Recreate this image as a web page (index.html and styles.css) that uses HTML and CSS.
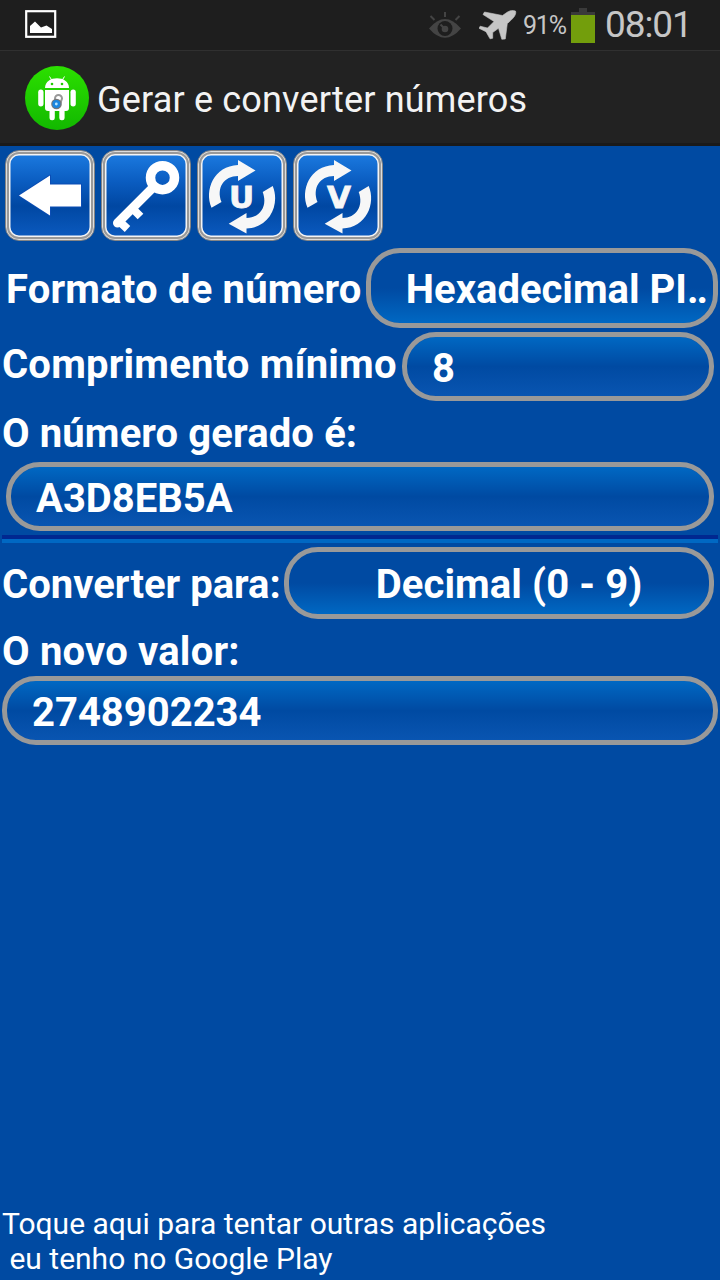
FILE: index.html
```
<!DOCTYPE html>
<html lang="pt">
<head>
    <meta charset="UTF-8">
    <meta name="viewport" content="width=device-width, initial-scale=1.0">
    <title>Gerar e converter números</title>
    <link rel="stylesheet" href="styles.css">
</head>
<body>
    <!-- Status Bar -->
    <div class="status-bar">
        <svg class="picture-icon" width="32" height="30" viewBox="0 0 32 30">
            <rect x="1.2" y="2.2" width="29" height="25.6" fill="none" stroke="#fff" stroke-width="2.2"/>
            <path d="M5 24V17L10 12.500L16 18.500L21.500 16.500L27 20V24Z" fill="#fff"/>
        </svg>
        <div class="status-right">
            <svg class="eye-icon" width="34" height="28" viewBox="0 0 34 28">
                <path d="M1 17.500Q17-1.500 33 17.500Q17 36 1 17.500Z" fill="#444"/>
                <circle cx="17" cy="17.500" r="7.500" fill="#1e1e1e"/>
                <circle cx="17" cy="18" r="3.300" fill="#444"/>
                <path d="M17 18L12.500 13.500M17 1V6M2.500 5L6.500 9M31.500 5L27.500 9" stroke="#444" stroke-width="2" fill="none"/>
            </svg>
            <svg class="plane-icon" width="38" height="32" viewBox="0 0 38 32">
                <path d="M36.500 1C34 0 31 0.500 28.500 2L23.500 5.500L5.500 2L4 4.500L15 11.500L8.500 18L1.200 16.200L0 18.300L7 21.700L11 28.800L13.700 28.300V22.500L19.500 18.300L22.800 29.300L26.300 29L28.300 13.500C33 9.500 38 5 36.500 1Z" fill="#c6c6c6" stroke="#c6c6c6" stroke-width="0.6"/>
            </svg>
            <span class="percent">91%</span>
            <svg class="battery-icon" width="24" height="35" viewBox="0 0 24 35">
                <path d="M0 4H8V0H16V4H24V35H0Z" fill="#3a3a3a"/>
                <rect y="7" width="24" height="28" fill="#739e0c"/>
            </svg>
            <span class="clock">08:01</span>
        </div>
    </div>

    <!-- Title Bar -->
    <div class="title-bar">
        <svg class="app-icon" width="64" height="64" viewBox="0 0 64 64">
            <defs>
                <linearGradient id="green" x1="0" y1="0" x2="0" y2="1">
                    <stop offset="0" stop-color="#2ce000"/>
                    <stop offset="1" stop-color="#12b800"/>
                </linearGradient>
            </defs>
            <circle cx="32" cy="32" r="32" fill="url(#green)"/>
            <g fill="#fff">
                <path d="M20 22C20 9 44 9 44 22Z"/>
                <path d="M20 24H44V42Q44 45 41 45H23Q20 45 20 42Z"/>
                <rect x="13.200" y="23.500" width="5.300" height="17" rx="2.650"/>
                <rect x="45.500" y="23.500" width="5.300" height="17" rx="2.650"/>
                <rect x="24.500" y="42" width="5.300" height="12.300" rx="2.400"/>
                <rect x="34.300" y="42" width="5.300" height="12.300" rx="2.400"/>
            </g>
            <path d="M24.500 10.500L27 14.500M39.500 10.500L37 14.500" stroke="#fff" stroke-width="1"/>
            <circle cx="27" cy="18" r="1.300" fill="#20cc00"/>
            <circle cx="37" cy="18" r="1.300" fill="#20cc00"/>
            <path d="M30 36V32.500A3.500 3.500 0 0 1 37 32.500L35.500 37" fill="none" stroke="#999" stroke-width="2"/>
            <circle cx="31.500" cy="38" r="5.300" fill="#777"/>
            <circle cx="31.300" cy="38" r="4" fill="#1c86e0"/>
            <circle cx="31.300" cy="38" r="1.400" fill="#b8e6ff"/>
        </svg>
        <h1>Gerar e converter números</h1>
    </div>

    <!-- Main Screen -->
    <div class="screen">
        <div class="toolbar">
            <button class="tool">
                <svg width="80" height="80" viewBox="0 0 80 80">
                    <path d="M9 39.500L40 19.500V28.500H71V50.500H40V59.500Z" fill="#fff" stroke="#0b4db4" stroke-width="2" stroke-linejoin="round" paint-order="stroke"/>
                </svg>
            </button>
            <button class="tool">
                <svg width="80" height="80" viewBox="0 0 80 80">
                    <g fill="none" stroke="#fff">
                        <circle cx="56.500" cy="21.700" r="12" stroke-width="9.500"/>
                        <path d="M47 31.500L11.500 67" stroke-width="9" stroke-linecap="round"/>
                        <path d="M27 53L34.500 60.500M13.500 65.500L21.500 73" stroke-width="8"/>
                    </g>
                </svg>
            </button>
            <button class="tool">
                <svg width="80" height="80" viewBox="0 0 80 80">
                    <g fill="#f7f7f7">
                        <path d="M9.500 51.700C2 34 12 10 36 9V4L53.500 14.500L36 25V20C22 20 14 32 19.500 46Z"/>
                        <path d="M70.700 30C78.200 47.700 68.200 71.700 44.500 72.500V77.500L26.700 67.700L44.500 57V62C58 62 66 50 60.700 36Z"/>
                    </g>
                    <text class="letter" x="39.500" y="51.500">U</text>
                </svg>
            </button>
            <button class="tool">
                <svg width="80" height="80" viewBox="0 0 80 80">
                    <g fill="#f7f7f7">
                        <path d="M9.500 51.700C2 34 12 10 36 9V4L53.500 14.500L36 25V20C22 20 14 32 19.500 46Z"/>
                        <path d="M70.700 30C78.200 47.700 68.200 71.700 44.500 72.500V77.500L26.700 67.700L44.500 57V62C58 62 66 50 60.700 36Z"/>
                    </g>
                    <text class="letter" x="41" y="51.500">V</text>
                </svg>
            </button>
        </div>

        <div class="row format-row">
            <span class="label format-label">Formato de número</span>
            <div class="select format-select"><span>Hexadecimal PI<span class="dots">..</span></span></div>
        </div>

        <div class="row length-row">
            <span class="label length-label">Comprimento mínimo</span>
            <div class="field length-field">8</div>
        </div>

        <div class="label generated-label">O número gerado é:</div>
        <div class="field generated-field">A3D8EB5A</div>

        <div class="divider"></div>

        <div class="row convert-row">
            <span class="label convert-label">Converter para:</span>
            <div class="select convert-select">Decimal (0 - 9)</div>
        </div>

        <div class="label new-label">O novo valor:</div>
        <div class="field new-field">2748902234</div>

        <p class="more-apps">Toque aqui para tentar outras aplicações<br>&nbsp;eu tenho no Google Play</p>
    </div>
</body>
</html>
```
FILE: styles.css
```
/* Basic Reset */
* {
    margin: 0;
    padding: 0;
    box-sizing: border-box;
}

body {
    display: flex;
    flex-direction: column;
    width: 720px;
    height: 1280px;
    overflow: hidden;
    background-color: #004aa2;
    color: #fff;
    font-family: Roboto, "Liberation Sans", sans-serif;
    white-space: nowrap;
}

svg {
    display: block;
    flex: none;
}

/* Status Bar */
.status-bar {
    display: flex;
    justify-content: space-between;
    flex: none;
    height: 51px;
    padding: 0 29px 0 25px;
    background-color: #1e1e1e;
    border-bottom: 1px solid #303030;
    color: #c6c6c6;
}
.picture-icon {
    margin-top: 9px;
}
.status-right {
    display: flex;
}
.eye-icon {
    margin: 11px 17px 0 0;
}
.plane-icon {
    margin: 10px 6px 0 0;
}
.percent {
    width: 48px;
    line-height: 52px;
    font-size: 25px;
    letter-spacing: -1.2px;
}
.battery-icon {
    margin: 8px 10px 0 0;
}
.clock {
    width: 86px;
    line-height: 49px;
    font-size: 37px;
    letter-spacing: -1.1px;
}

/* Title Bar */
.title-bar {
    display: flex;
    align-items: center;
    gap: 8px;
    flex: none;
    height: 95px;
    padding-left: 25px;
    background-color: #222;
    border-bottom: 3px solid #1a1a1a;
}
.app-icon {
    margin-top: 2px;
}
.title-bar h1 {
    margin-top: 6px;
    font-size: 36px;
    font-weight: 400;
    letter-spacing: 0.18px;
    color: #f3f3f3;
}

/* Main Screen */
.screen {
    display: flex;
    flex-direction: column;
    flex: 1;
    padding-top: 4px;
}

/* Toolbar */
.toolbar {
    display: flex;
    gap: 6px;
    height: 98px;
    padding-left: 5px;
}
.tool {
    width: 90px;
    height: 91px;
    padding: 4px;
    border: 1px solid #858585;
    border-radius: 14px;
    background: linear-gradient(#1d7de3, #0a5cc0 35%, #0047a2 62%, #0c5cc2);
    box-shadow: inset 0 0 0 1px #ddd, inset 0 0 0 3px #999, inset 0 0 0 4.500px #f4f4f4;
}
.letter {
    fill: #f7f7f7;
    stroke: #f7f7f7;
    stroke-width: 0.8px;
    font-family: "DejaVu Sans", sans-serif;
    font-size: 31px;
    font-weight: 700;
    text-anchor: middle;
}

/* Form Rows */
.row {
    display: flex;
    flex: none;
}
.label,
.field,
.select {
    font-size: 40px;
    font-weight: 700;
}
.label {
    letter-spacing: 0.2px;
}
.field,
.select {
    display: flex;
    align-items: center;
    flex: none;
    border: 5px solid #999;
    border-radius: 34px;
}
.field {
    height: 69px;
    padding: 3px 0 0 25px;
    background: linear-gradient(#0068c3, #004aa2 50%, #0955b1) padding-box;
}
.select {
    justify-content: center;
    background: linear-gradient(#004aa2, #004aa2 50%, #0068c3) padding-box;
}

.format-row {
    height: 84px;
}
.format-label {
    width: 360px;
    margin-right: 6px;
    padding-left: 6px;
    line-height: 84px;
}
.format-select {
    width: 352px;
    height: 80px;
    padding: 2px 0 0 28px;
}
.dots {
    letter-spacing: -2px;
}
.length-row {
    height: 69px;
}
.length-label {
    width: 400px;
    margin-right: 2px;
    padding-left: 2px;
    line-height: 65px;
}
.length-field {
    width: 312px;
}
.generated-label {
    height: 61px;
    padding-left: 2px;
    line-height: 65px;
    letter-spacing: 0.13px;
}
.generated-field {
    width: 708px;
    margin-left: 6px;
}
.divider {
    flex: none;
    height: 8px;
    margin: 4px 2px;
    background: linear-gradient(#002890 50%, #0068c3 50%);
}
.convert-row {
    height: 72px;
}
.convert-label {
    width: 282px;
    margin-right: 2px;
    padding-left: 2px;
    line-height: 76px;
    letter-spacing: 0;
}
.convert-select {
    width: 430px;
    height: 72px;
    padding: 2px 0 0 20px;
    letter-spacing: 0.1px;
}
.new-label {
    height: 57px;
    padding-left: 2px;
    line-height: 65px;
}
.new-field {
    width: 716px;
    margin-left: 2px;
}

/* Bottom Link */
.more-apps {
    margin-top: auto;
    padding: 0 0 4px 2px;
    font-size: 30px;
    line-height: 35px;
}
```
